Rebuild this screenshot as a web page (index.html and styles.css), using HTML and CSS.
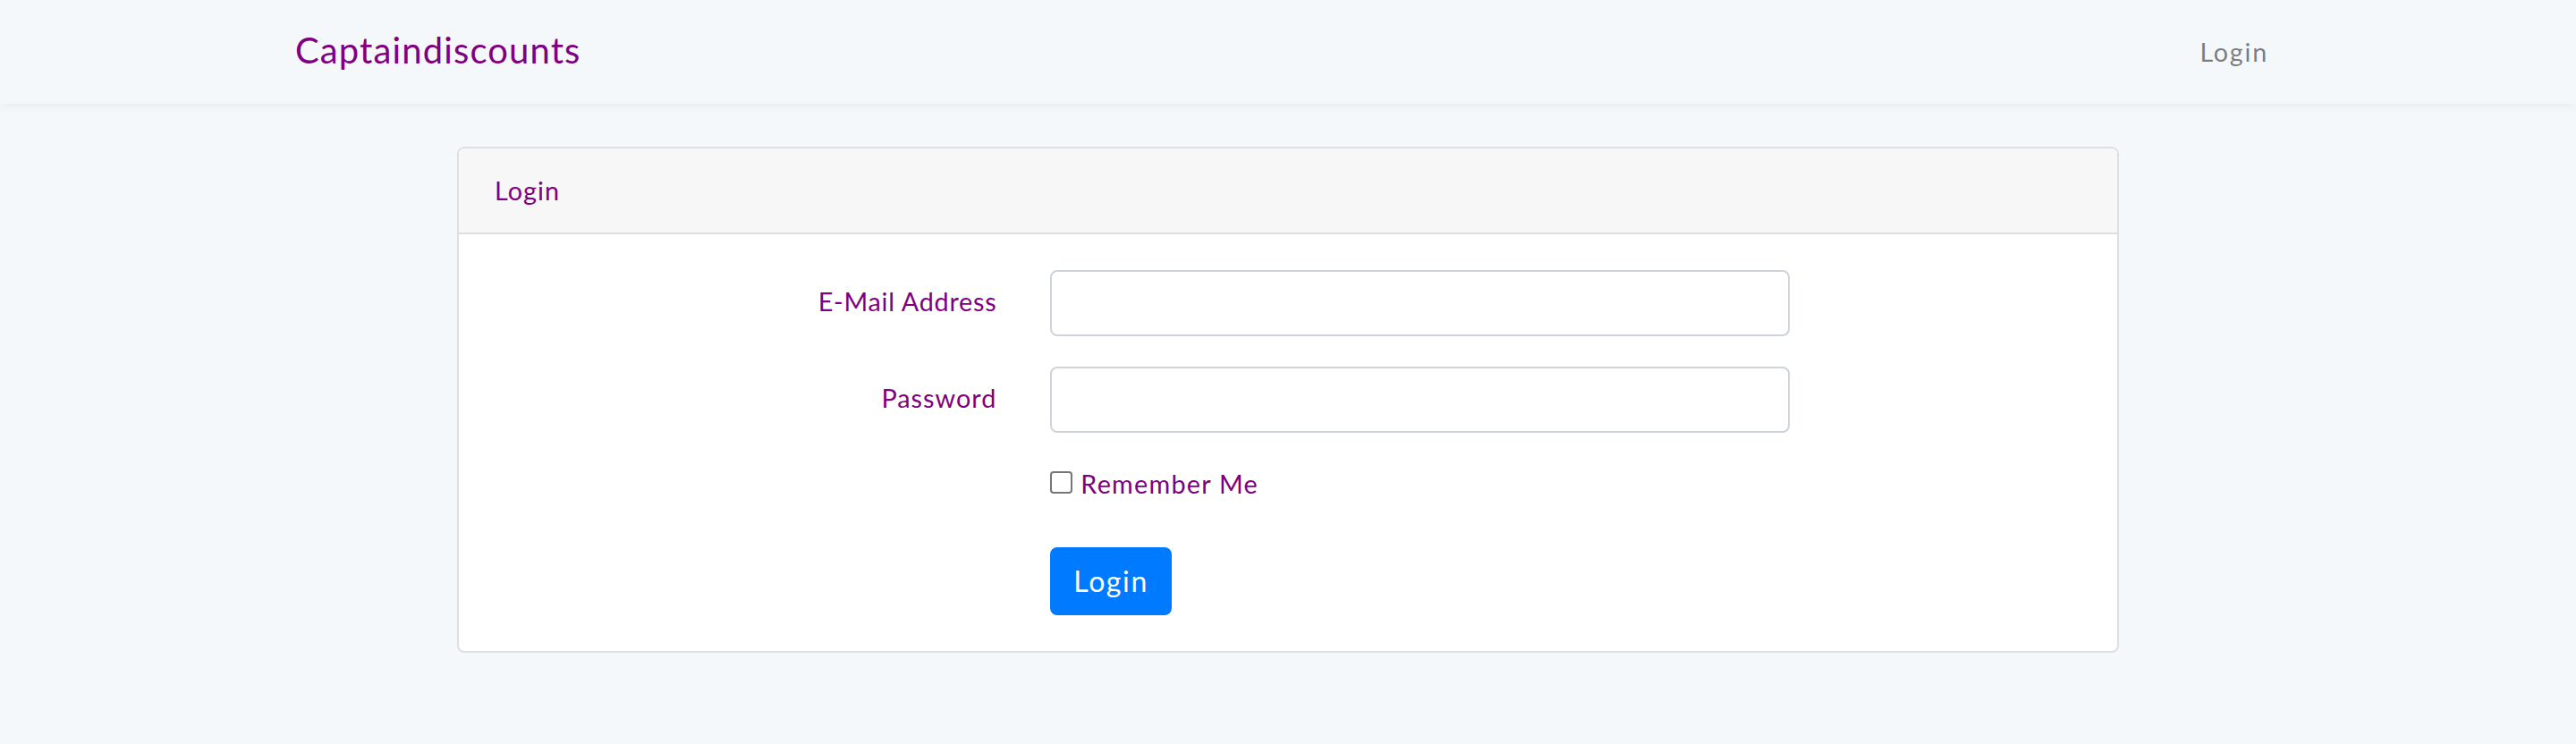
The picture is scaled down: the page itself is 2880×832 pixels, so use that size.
FILE: index.html
```html
<!DOCTYPE html>
<html lang="en">
<head>
<meta charset="utf-8">
<title>Captaindiscounts</title>
<link rel="stylesheet" href="styles.css">
</head>
<body>
<nav class="navbar">
  <div class="container nav-inner">
    <a class="brand" href="#">Captaindiscounts</a>
    <a class="nav-link" href="#">Login</a>
  </div>
</nav>
<main class="main">
  <div class="card">
    <div class="card-header">Login</div>
    <div class="card-body">
      <form class="form">
        <div class="form-row">
          <label class="col-label label-email" for="email">E-Mail Address</label>
          <div class="col-field"><input class="form-control" id="email" type="email"></div>
        </div>
        <div class="form-row">
          <label class="col-label" for="password">Password</label>
          <div class="col-field"><input class="form-control" id="password" type="password"></div>
        </div>
        <div class="form-row check-row">
          <div class="col-offset"></div>
          <div class="col-field">
            <div class="form-check">
              <input class="check" type="checkbox" id="remember">
              <label class="check-label" for="remember">Remember Me</label>
            </div>
          </div>
        </div>
        <div class="form-row last-row">
          <div class="col-offset"></div>
          <div class="col-field">
            <button class="btn" type="button">Login</button>
          </div>
        </div>
      </form>
    </div>
  </div>
</main>
</body>
</html>
```

FILE: styles.css
```css
* { box-sizing: border-box; }

html, body {
  margin: 0;
  padding: 0;
}

body {
  background: #f5f8fa;
  font-family: Lato, "Noto Sans", sans-serif;
  font-size: 28.8px;
  line-height: 1.6;
  letter-spacing: 0.035em;
  color: #800080;
}

a { text-decoration: none; }

.navbar {
  padding: 16px 0;
  background: #f5f8fa;
  box-shadow: 0 4px 8px rgba(0, 0, 0, 0.04);
}

.container {
  width: 2280px;
  margin: 0 auto;
  padding: 0 30px;
}

.nav-inner {
  display: flex;
  align-items: center;
  justify-content: space-between;
}

.brand {
  color: #800080;
  font-size: 40px;
  letter-spacing: 0.028em;
  line-height: 64px;
  padding: 8px 0 12px;
}

.nav-link {
  color: rgba(0, 0, 0, 0.5);
  letter-spacing: 0.06em;
  padding: 16px 14px 16px 16px;
  line-height: 46px;
}

.main {
  padding-top: 48px;
}

.card {
  width: 1858px;
  margin: 0 auto;
  background: #fff;
  border: 2px solid #dfdfdf;
  border-radius: 8px;
  overflow: hidden;
}

.card-header {
  background: #f7f7f7;
  padding: 24px 40px;
  border-bottom: 2px solid #dfdfdf;
  line-height: 46px;
}

.card-body {
  padding: 40px;
}

.form-row {
  display: grid;
  grid-template-columns: 4fr 6fr 2fr;
  margin-bottom: 34px;
}

.check-row { margin-bottom: 48px; }
.last-row { margin-bottom: 0; }

.col-label {
  padding: 12px 30px 16px;
  line-height: 46px;
  text-align: right;
}

.label-email {
  letter-spacing: 0.025em;
}

.col-field {
  padding: 0 30px;
}

.form-control {
  display: block;
  width: 100%;
  height: 74px;
  border: 2px solid #ced4da;
  border-radius: 8px;
  background: #fff;
  font: inherit;
  padding: 12px 24px;
}

.form-check {
  display: flex;
  align-items: center;
  gap: 9px;
  line-height: 46px;
}

.check-label {
  letter-spacing: 0.043em;
}

.check {
  appearance: none;
  -webkit-appearance: none;
  margin: 0;
  width: 25px;
  height: 25px;
  border: 2px solid #767676;
  border-radius: 4px;
  background: #fff;
  position: relative;
  top: -2px;
}

.btn {
  font-family: inherit;
  font-size: 32px;
  letter-spacing: 0.05em;
  line-height: 48px;
  padding: 12px 24px;
  color: #fff;
  background: #007bff;
  border: 2px solid #007bff;
  border-radius: 8px;
}
```
